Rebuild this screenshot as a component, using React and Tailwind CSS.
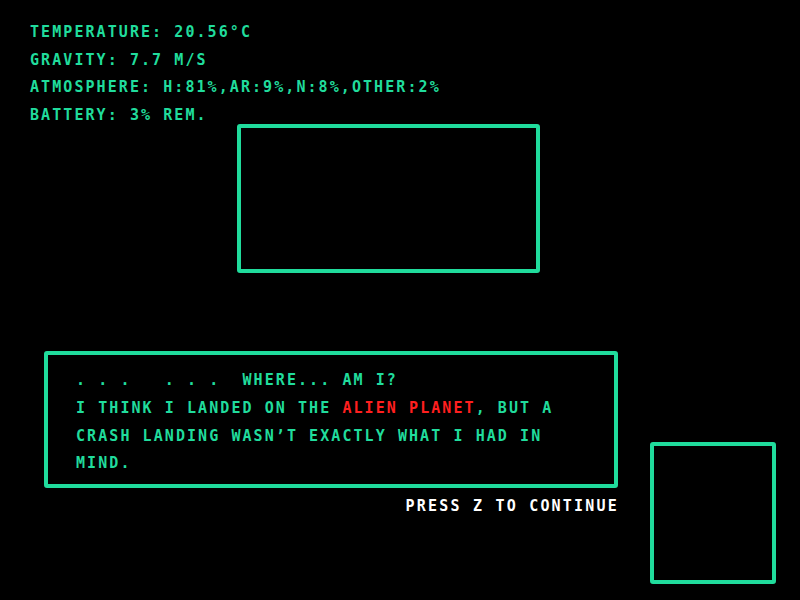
const green = 'text-[#20dc9c]';

const stats = [
  'TEMPERATURE: 20.56°C',
  'GRAVITY: 7.7 M/S',
  'ATMOSPHERE: H:81%,AR:9%,N:8%,OTHER:2%',
  'BATTERY: 3% REM.',
];

export default function App() {
  return (
    <div
      className="w-[800px] h-[600px] bg-black overflow-hidden font-bold text-[15px] leading-[27.6px] tracking-[2.07px] whitespace-pre"
      style={{ fontFamily: '"DejaVu Sans Mono", "Liberation Mono", monospace' }}
    >
      {/* HUD stats */}
      <div className={`pl-[30px] pt-[19px] ${green}`}>
        {stats.map(s => (
          <div key={s}>{s}</div>
        ))}
      </div>

      {/* Viewport box */}
      <div className="ml-[237px] mt-[-5px] w-[303px] h-[149px] border-4 border-[#20dc9c] rounded-[3px]" />

      <div className="flex mt-[78px]">
        <div className="ml-[44px] w-[574px]">
          {/* Dialog */}
          <div className={`h-[137px] border-4 border-[#20dc9c] rounded-[3px] pl-[28px] pt-[12px] ${green}`}>
            <div>{'. . .   . . .  WHERE... AM I?'}</div>
            <div>
              I THINK I LANDED ON THE <span className="text-[#ff1f1f]">ALIEN PLANET</span>, BUT A
            </div>
            <div>CRASH LANDING WASN’T EXACTLY WHAT I HAD IN</div>
            <div>MIND.</div>
          </div>
          <div className="flex justify-end mt-[5px] text-white tracking-[2.2px]">
            <span className="mr-[-1px]">PRESS Z TO CONTINUE</span>
          </div>
        </div>

        {/* Portrait box */}
        <div className="ml-[32px] mt-[91px] w-[126px] h-[142px] border-4 border-[#20dc9c] rounded-[3px]" />
      </div>
    </div>
  );
}
